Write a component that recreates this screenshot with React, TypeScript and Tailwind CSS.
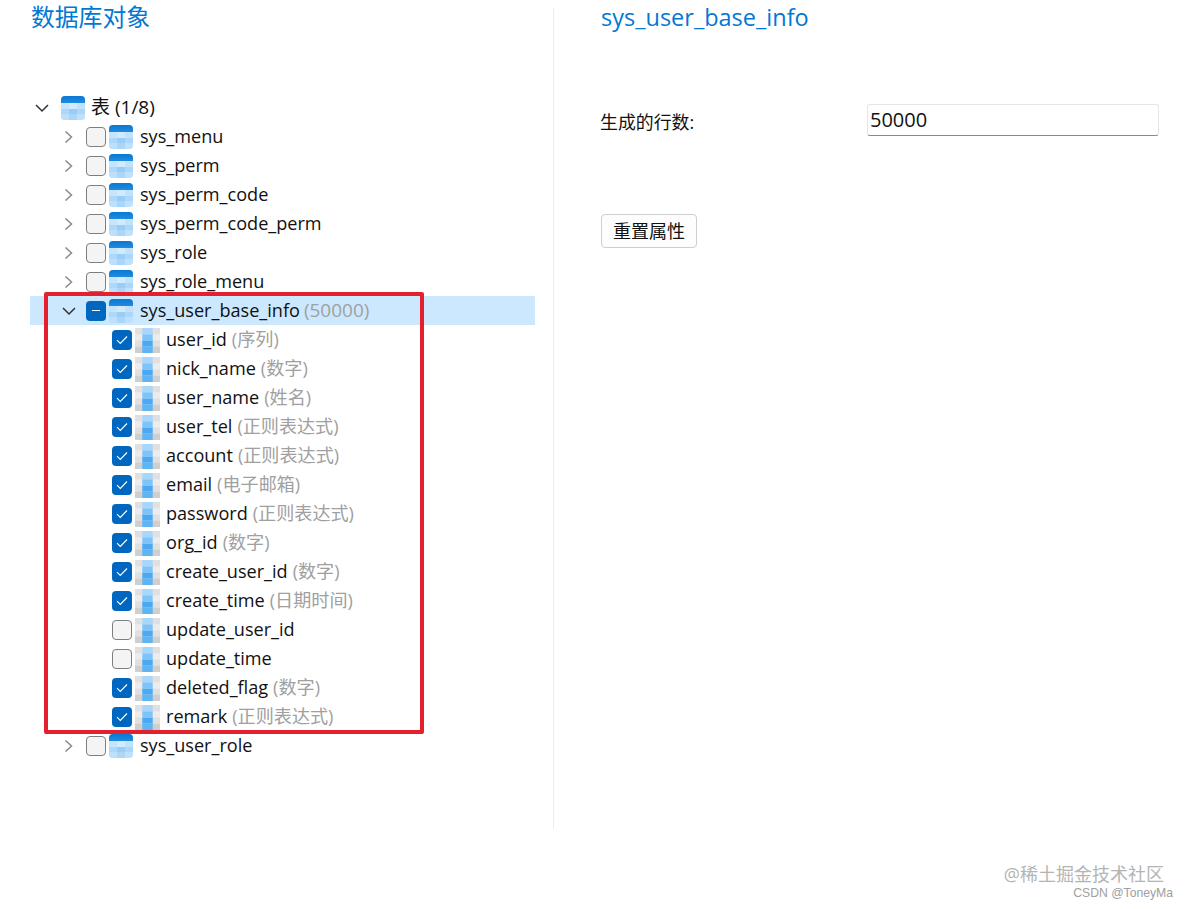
const font = "font-['Open_Sans','Noto_Sans_CJK_SC',sans-serif]";

const TableIcon = () => (
  <svg width="24" height="24" viewBox="0 0 24 24" className="shrink-0">
    <defs>
      <linearGradient id="tblTop" x1="0" y1="0" x2="0" y2="1">
        <stop offset="0" stopColor="#0a78d2" />
        <stop offset="1" stopColor="#1f8be0" />
      </linearGradient>
      <clipPath id="tbl">
        <rect width="24" height="24" rx="4" />
      </clipPath>
    </defs>
    <g clipPath="url(#tbl)">
      <rect width="24" height="24" fill="#b9ddfb" />
      <rect width="24" height="7" fill="url(#tblTop)" />
      <rect y="7" width="8" height="6" fill="#c6e4fc" />
      <rect x="8" y="7" width="8" height="6" fill="#d3eafd" />
      <rect x="16" y="7" width="8" height="6" fill="#c2e2fc" />
      <rect y="13" width="8" height="5" fill="#aed8fa" />
      <rect x="8" y="13" width="8" height="5" fill="#98cdf8" />
      <rect x="16" y="13" width="8" height="5" fill="#acd7fa" />
      <rect y="18" width="8" height="6" fill="#bcdffb" />
      <rect x="8" y="18" width="8" height="6" fill="#a9d6f9" />
      <rect x="16" y="18" width="8" height="6" fill="#c0e1fb" />
    </g>
  </svg>
);

const ColumnIcon = () => (
  <svg width="25" height="25" viewBox="0 0 24 24" className="shrink-0">
    <rect x="0" y="0" width="8" height="24" fill="#e0e0e0" />
    <rect x="16" y="0" width="8" height="24" fill="#e0e0e0" />
    <rect x="0" y="6" width="8" height="6" fill="#ececec" />
    <rect x="16" y="6" width="8" height="6" fill="#ececec" />
    <rect x="0" y="18" width="8" height="6" fill="#cfcfcf" />
    <rect x="16" y="18" width="8" height="6" fill="#cfcfcf" />
    <rect x="7" y="0" width="10" height="6" fill="#a8d7fb" />
    <rect x="7" y="6" width="10" height="6" fill="#7fc4f9" />
    <rect x="7" y="12" width="10" height="6" fill="#4aa9f2" />
    <rect x="7" y="18" width="10" height="6" fill="#5fb4f4" />
  </svg>
);

const ChevronRight = () => (
  <svg width="12" height="12" viewBox="0 0 12 12" className="shrink-0">
    <path d="M2.5 0.5 L8.5 6 L2.5 11.5" fill="none" stroke="#8a8a8a" strokeWidth="1.5" />
  </svg>
);

const ChevronDown = () => (
  <svg width="14" height="12" viewBox="0 0 14 12" className="shrink-0">
    <path d="M1 3 L7 9 L13 3" fill="none" stroke="#333" strokeWidth="1.5" />
  </svg>
);

const Check = ({ state }: { state: "on" | "off" | "mixed" }) => {
  if (state === "off") {
    return (
      <div className="w-5 h-5 shrink-0 rounded-[4px] border border-[#7f7f7f] bg-[#f4f4f4]" />
    );
  }
  return (
    <div className="w-5 h-5 shrink-0 rounded-[4px] bg-[#0067c0] flex items-center justify-center">
      {state === "on" ? (
        <svg width="12" height="10" viewBox="0 0 12 10">
          <path d="M1 5.2 L4.3 8.5 L11 1.5" fill="none" stroke="#fff" strokeWidth="1.1" />
        </svg>
      ) : (
        <div className="w-2 h-px bg-white" />
      )}
    </div>
  );
};

const tables = ["sys_menu", "sys_perm", "sys_perm_code", "sys_perm_code_perm", "sys_role", "sys_role_menu"];

const columns: { name: string; hint?: string }[] = [
  { name: "user_id", hint: "序列" },
  { name: "nick_name", hint: "数字" },
  { name: "user_name", hint: "姓名" },
  { name: "user_tel", hint: "正则表达式" },
  { name: "account", hint: "正则表达式" },
  { name: "email", hint: "电子邮箱" },
  { name: "password", hint: "正则表达式" },
  { name: "org_id", hint: "数字" },
  { name: "create_user_id", hint: "数字" },
  { name: "create_time", hint: "日期时间" },
  { name: "update_user_id" },
  { name: "update_time" },
  { name: "deleted_flag", hint: "数字" },
  { name: "remark", hint: "正则表达式" },
];

const TableRow = ({ name }: { name: string }) => (
  <div className="h-[29px] flex items-center pl-[33px]">
    <ChevronRight />
    <div className="ml-[11px]">
      <Check state="off" />
    </div>
    <div className="ml-[3px]">
      <TableIcon />
    </div>
    <span className="ml-[7px]">{name}</span>
  </div>
);

export default function App() {
  return (
    <div className={`${font} w-[1188px] h-[909px] bg-white text-[18.1px] text-[#111] relative overflow-hidden`}>
      <div className="flex pt-[8px]">
        <div className="w-[554px] h-[821px] border-r border-[#ececec] pl-[30px] pr-[18px]">
          <div className="h-[85px] pl-px text-[23.8px] leading-[18px] text-[#0078d4]">数据库对象</div>
          <div className="h-[29px] flex items-center pl-[5px]">
            <ChevronDown />
            <div className="ml-[12px]">
              <TableIcon />
            </div>
            <span className="ml-[6px] text-[19px]">表 (1/8)</span>
          </div>
          {tables.map((t) => (
            <TableRow key={t} name={t} />
          ))}
          <div className="h-[29px] flex items-center pl-[32px] bg-[#cce8ff]">
            <ChevronDown />
            <div className="ml-[10px]">
              <Check state="mixed" />
            </div>
            <div className="ml-[3px]">
              <TableIcon />
            </div>
            <span className="ml-[7px]">sys_user_base_info</span>
            <span className="ml-[4px] text-[19px] text-[#a0a0a0]">(50000)</span>
          </div>
          {columns.map((c) => (
            <div key={c.name} className="h-[29px] flex items-center pl-[82px]">
              <Check state={c.hint ? "on" : "off"} />
              <div className="ml-[3px] mt-[1px]">
                <ColumnIcon />
              </div>
              <span className="ml-[6px]">{c.name}</span>
              {c.hint && <span className="ml-[5px] text-[#a0a0a0]">({c.hint})</span>}
            </div>
          ))}
          <TableRow name="sys_user_role" />
        </div>
        <div className="pl-[46px] flex-1">
          <div className="h-[85px] pl-px text-[23.5px] leading-[18px] text-[#0078d4]">sys_user_base_info</div>
          <div className="flex items-start w-[559px] h-[32px] mt-[11px]">
            <span className="w-[267px] shrink-0 text-[17.9px] pt-[5px]">生成的行数:</span>
            <div className="w-[292px] h-[32px] px-[2px] flex items-center border border-[#e5e5e5] border-b-[#8a8a8a] rounded-[3px] text-[20px]">
              50000
            </div>
          </div>
          <button className="mt-[78px] ml-px h-[34px] w-[96px] border border-[#cfcfcf] rounded-[4px] bg-[#fdfdfd] text-[18px] flex items-center justify-center">
            重置属性
          </button>
        </div>
      </div>

      {/* annotation drawn over the tree */}
      <div className="absolute left-[44px] top-[292px] w-[380px] h-[442px] border-[4px] border-[#e5202e] rounded-[2px]" />

      {/* watermark */}
      <div className="absolute right-[24px] top-[862px] text-[18px] leading-[24px] text-[#b4b4b4]">@稀土掘金技术社区</div>
      <div className="absolute right-[15px] top-[885px] text-[12.2px] leading-[16px] text-[#a0a0a0] font-['Liberation_Sans',sans-serif]">CSDN @ToneyMa</div>
    </div>
  );
}
